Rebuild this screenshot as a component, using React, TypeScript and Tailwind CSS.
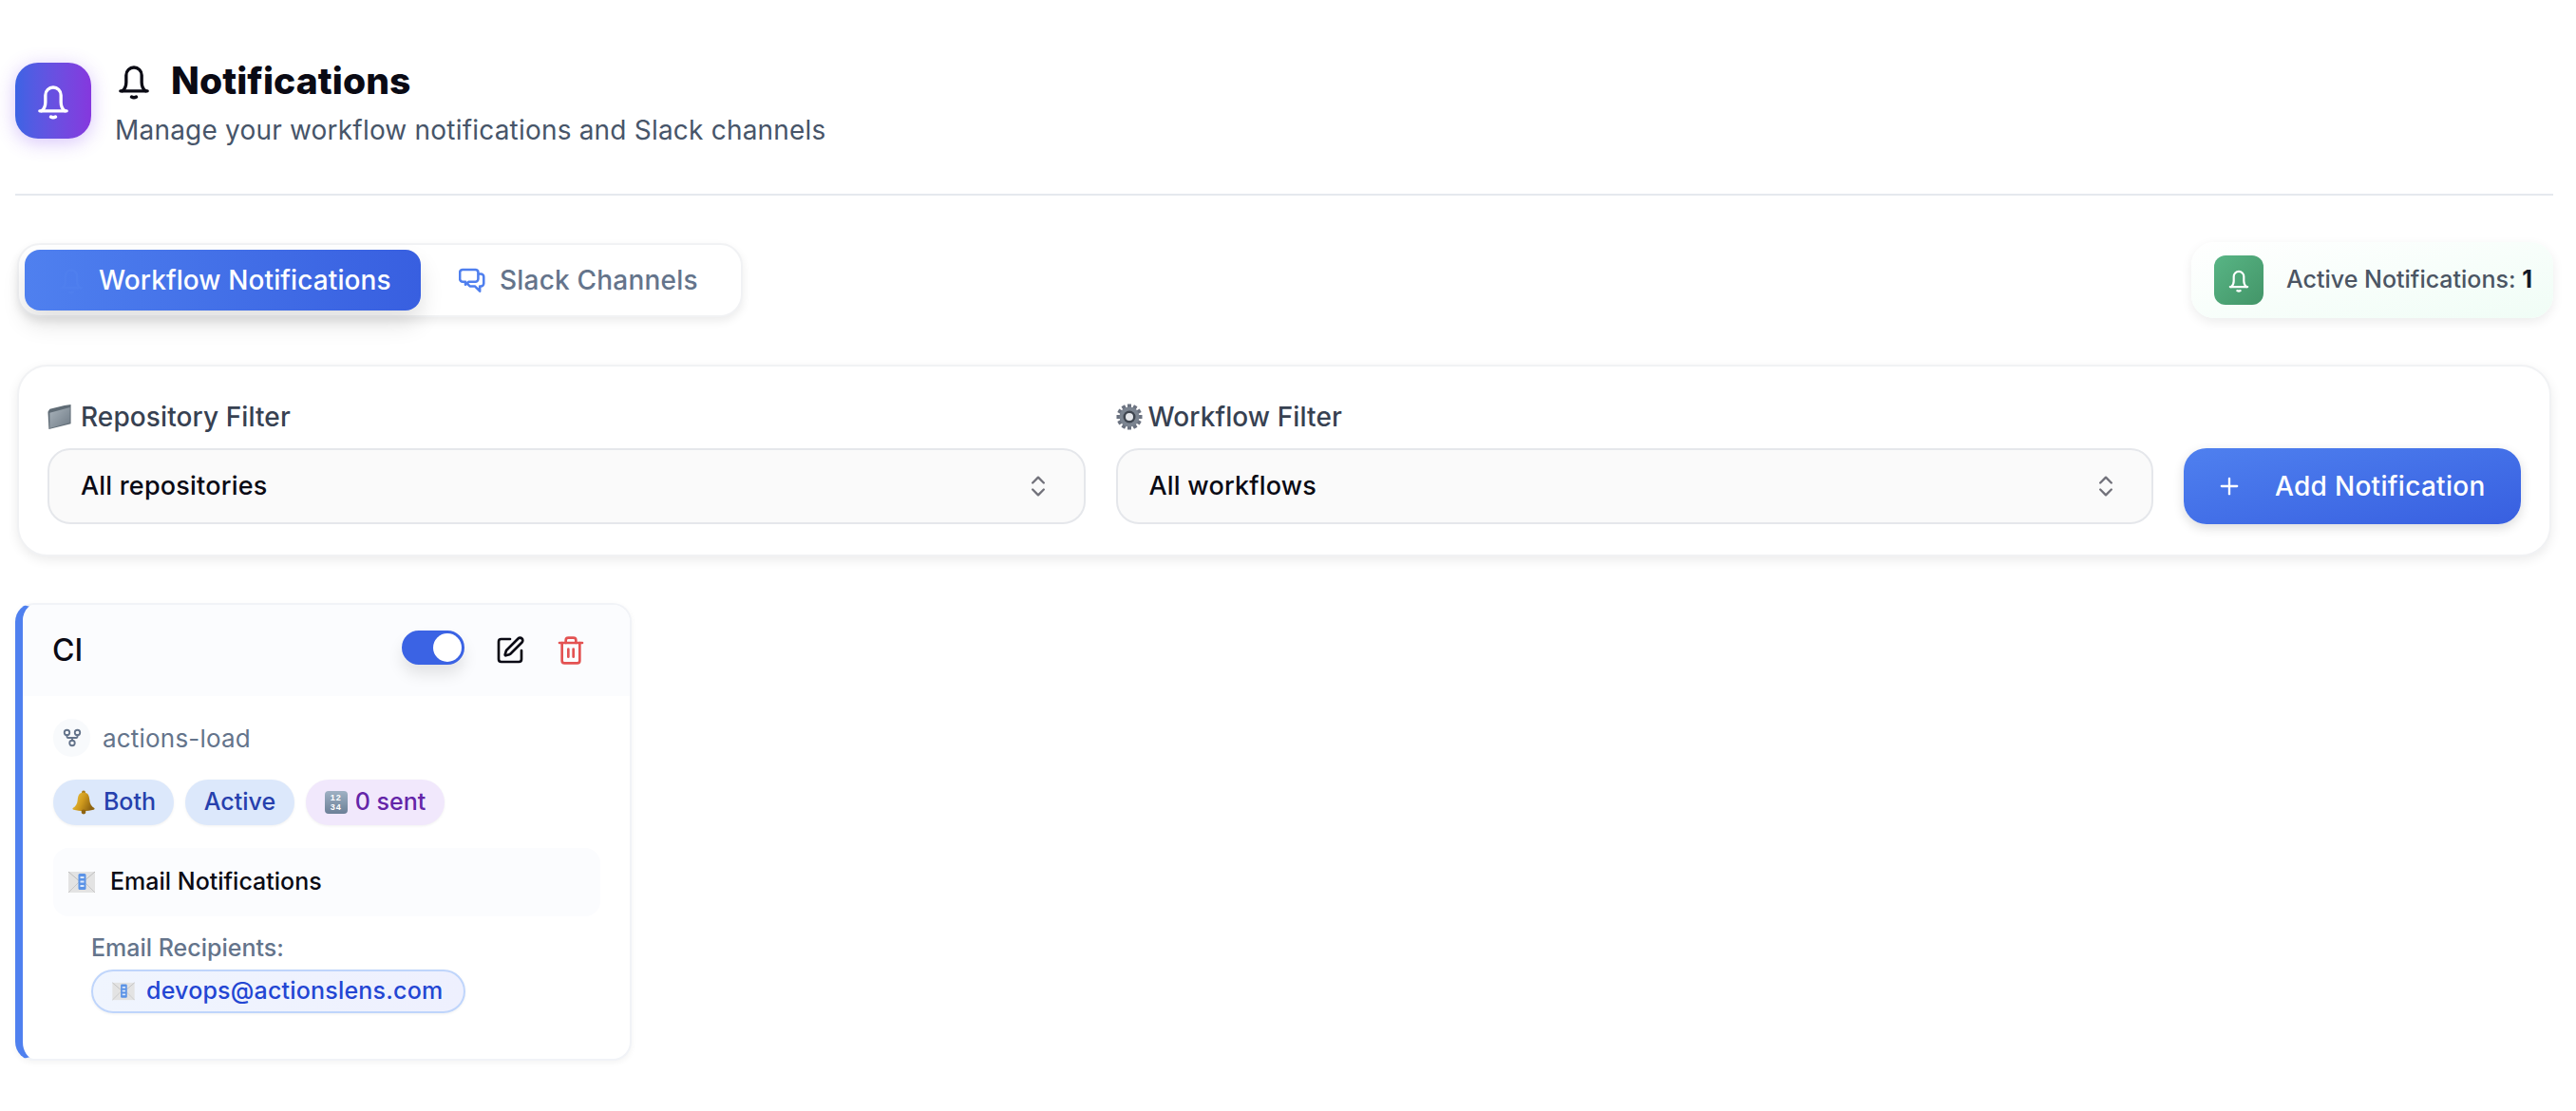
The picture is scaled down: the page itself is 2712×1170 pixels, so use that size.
import React from "react";
import { Plus, ChevronsUpDown, SquarePen, Trash2, GitFork } from "lucide-react";

function BellGlyph({ className, sw = 2 }: { className?: string; sw?: number }) {
  return (
    <svg viewBox="0 0 24 24" fill="none" stroke="currentColor" strokeWidth={sw} strokeLinecap="round" strokeLinejoin="round" className={className}>
      <path d="M3.5 18.5h17" />
      <path d="M4.5 18.5c1.8-1.2 2.6-3 2.6-5.5V8.5a4.9 4.9 0 0 1 9.8 0V13c0 2.5.8 4.3 2.6 5.5" />
      <path d="M10.5 22.2c1 .6 2 .6 3 0" />
    </svg>
  );
}

function ChatIcon({ className }: { className?: string }) {
  return (
    <svg viewBox="0 0 24 24" fill="none" stroke="currentColor" strokeWidth={2.2} strokeLinecap="round" strokeLinejoin="round" className={className}>
      <path d="M3.5 2.5h11.5a2.5 2.5 0 0 1 2.5 2.5v6a2.5 2.5 0 0 1-2.5 2.5H9l-3 2.5v-2.5H3.5A2.5 2.5 0 0 1 1 11V5a2.5 2.5 0 0 1 2.5-2.5z" />
      <path d="M18 6.5h2a2.5 2.5 0 0 1 2.5 2.5v6a2.5 2.5 0 0 1-2.5 2.5h-1v4.5l-4.5-4.5H10l-2-2" />
    </svg>
  );
}

function FolderEmoji({ className }: { className?: string }) {
  return (
    <svg viewBox="0 0 26 28" className={className}>
      <defs>
        <linearGradient id="fold" x1="0" y1="0" x2="1" y2="1">
          <stop offset="0" stopColor="#a9b3bb" />
          <stop offset="1" stopColor="#6f7b86" />
        </linearGradient>
      </defs>
      <path d="M0 8 L2 5 L18 1 L25 0 L25 21 L1 27 Z" fill="#5f6b75" />
      <path d="M2 9 L24 3 L24 20 L2 26 Z" fill="url(#fold)" />
    </svg>
  );
}

function GearEmoji({ className }: { className?: string }) {
  const teeth = [0, 30, 60, 90, 120, 150, 180, 210, 240, 270, 300, 330];
  return (
    <svg viewBox="0 0 28 28" className={className}>
      {teeth.map((a) => (
        <rect key={a} x="12" y="0.5" width="4" height="6" fill="#6b7280" transform={`rotate(${a} 14 14)`} />
      ))}
      <circle cx="14" cy="14" r="10.5" fill="#7b8490" />
      <circle cx="14" cy="14" r="6.5" fill="#3f4650" />
      <circle cx="14" cy="14" r="4" fill="#e5e7eb" />
    </svg>
  );
}

function GoldBell({ className }: { className?: string }) {
  return (
    <svg viewBox="0 0 26 26" className={className}>
      <defs>
        <linearGradient id="gold" x1="0" y1="0" x2="1" y2="0.4">
          <stop offset="0" stopColor="#f0c84a" />
          <stop offset="0.55" stopColor="#cf9a1d" />
          <stop offset="1" stopColor="#8f6410" />
        </linearGradient>
      </defs>
      <circle cx="13" cy="2.5" r="2" fill="#a87a18" />
      <path d="M13 2.5c4.6 0 6 3.6 6.3 8 .3 4 1.8 6.6 5 8.6.6.7.2 1.4-.8 1.7-6.5 1.6-14.5 1.6-21 0-1-.3-1.4-1-.8-1.7 3.2-2 4.7-4.6 5-8.6.3-4.4 1.700-8 6.300-8z" fill="url(#gold)" />
      <circle cx="13" cy="23" r="2.400" fill="#8f6410" />
    </svg>
  );
}

function NumbersEmoji({ className }: { className?: string }) {
  return (
    <div className={`flex flex-col items-center justify-center rounded-[4px] bg-gradient-to-b from-[#9fb1c4] to-[#6c8097] font-bold leading-[10px] tracking-[1px] text-[9px] text-white ${className ?? ""}`} style={{ fontFamily: '"Liberation Sans", sans-serif' }}>
      <span>12</span>
      <span>34</span>
    </div>
  );
}

function MailEmoji({ className }: { className?: string }) {
  return (
    <svg viewBox="0 0 28 24" className={className}>
      <rect x="0" y="1" width="28" height="22" fill="#e3e3e3" />
      <path d="M0 1 L14 13 L28 1" fill="none" stroke="#bdbdbd" strokeWidth="1" />
      <path d="M0 23 L11 12 M28 23 L17 12" stroke="#c8c8c8" strokeWidth="1" />
      <rect x="10.500" y="3" width="8" height="17" rx="1.500" fill="#5b93e6" />
      <rect x="12.500" y="6" width="4" height="2" fill="#dbe8fb" />
      <rect x="12.500" y="10.500" width="4" height="2" fill="#dbe8fb" />
      <rect x="12.500" y="15" width="4" height="2" fill="#dbe8fb" />
    </svg>
  );
}

function Select({ label }: { label: string }) {
  return (
    <div className="flex h-[80px] items-center justify-between rounded-[24px] border-2 border-[#e5e7eb] bg-[#fafafa] pl-[33px] pr-[34px]">
      <span className="text-[27px] font-medium tracking-[0.2px] text-[#0a0a14]">{label}</span>
      <ChevronsUpDown className="h-[28px] w-[28px] text-[#71717a]" strokeWidth={2} />
    </div>
  );
}

export default function App() {
  return (
    <div className="min-h-[1170px] bg-white pl-4 pr-6 pt-[64px] text-[#0f172a]" style={{ fontFamily: 'Inter, "Noto Sans", sans-serif' }}>
      {/* Header */}
      <div className="flex h-[142px] items-start gap-[25px] border-b-2 border-[#e5e9ee]">
        <div className="mt-[2px] flex h-[80px] w-[80px] items-center justify-center rounded-[24px] bg-gradient-to-r from-[#3b63e4] to-[#8537de] text-white shadow-[0_4px_20px_rgba(124,58,237,0.3)]">
          <BellGlyph className="h-[40px] w-[40px]" sw={2} />
        </div>
        <div className="flex flex-col">
          <div className="flex items-center gap-[19px]">
            <BellGlyph className="h-[40px] w-[40px] text-[#0a0a14]" sw={2} />
            <h1 className="text-[39px] font-extrabold leading-[42px] tracking-[0.1px] text-[#0a0a14]">Notifications</h1>
          </div>
          <p className="mt-[13px] text-[28px] leading-[36px] tracking-[0.2px] text-[#475569]">Manage your workflow notifications and Slack channels</p>
        </div>
      </div>

      {/* Tabs row */}
      <div className="mt-[49px] flex items-center justify-between pl-[2px]">
        <div className="flex h-[78px] w-[764px] items-center gap-[40px] rounded-[24px] border-2 border-[#f1f2f4] bg-white pl-[6px] shadow-[0_4px_10px_rgba(0,0,0,0.08)]">
          <div className="flex h-[64px] w-[417px] items-center gap-[14px] rounded-[16px] bg-gradient-to-r from-[#4f80ef] to-[#385fe0] pl-[34px] text-white shadow-[0_14px_24px_rgba(0,0,0,0.12)]">
            <BellGlyph className="h-[30px] w-[30px] text-[#4f7fee]" />
            <span className="text-[28px] font-medium tracking-[0.1px]">Workflow Notifications</span>
          </div>
          <div className="flex items-center gap-[15px]">
            <ChatIcon className="h-[28px] w-[28px] text-[#4f7fee]" />
            <span className="text-[28px] font-medium tracking-[0.2px] text-[#64748b]">Slack Channels</span>
          </div>
        </div>

        <div className="flex h-[80px] w-[381px] items-center gap-[24px] rounded-[24px] bg-gradient-to-br from-white to-[#f0fdf6] pl-[24px] shadow-[0_4px_12px_rgba(0,0,0,0.08)]">
          <div className="flex h-[52px] w-[52px] items-center justify-center rounded-[12px] bg-gradient-to-br from-[#58b585] to-[#439568] text-white">
            <BellGlyph className="h-[26px] w-[26px]" sw={2} />
          </div>
          <span className="text-[25px] font-medium tracking-[0px] text-[#4b5563]">
            Active Notifications: <span className="font-bold text-[#111827]">1</span>
          </span>
        </div>
      </div>

      {/* Filter card */}
      <div className="ml-[2px] mr-[2px] mt-[49px] flex h-[202px] items-end gap-[32px] rounded-[32px] border-2 border-[#f1f2f4] bg-white px-[30px] pb-[32px] shadow-[0_4px_12px_rgba(0,0,0,0.08)]">
        <div className="flex flex-1 flex-col gap-[12px]">
          <div className="flex items-center gap-[9px]">
            <FolderEmoji className="h-[27px] w-[26px]" />
            <span className="text-[28px] font-medium tracking-[0.1px] text-[#374151]">Repository Filter</span>
          </div>
          <Select label="All repositories" />
        </div>
        <div className="flex flex-1 flex-col gap-[12px]">
          <div className="flex items-center gap-[6px]">
            <GearEmoji className="h-[28px] w-[28px]" />
            <span className="text-[28px] font-medium tracking-[0.1px] text-[#374151]">Workflow Filter</span>
          </div>
          <Select label="All workflows" />
        </div>
        <div className="flex h-[80px] w-[355px] items-center rounded-[24px] bg-gradient-to-br from-[#4f80ef] to-[#385fe0] pl-[34px] text-white shadow-[0_4px_12px_rgba(0,0,0,0.14)]">
          <Plus className="h-[28px] w-[28px]" strokeWidth={2} />
          <span className="ml-[34px] text-[28px] font-medium tracking-[0.3px]">Add Notification</span>
        </div>
      </div>

      {/* Notification card */}
      <div className="mt-[49px] h-[482px] w-[649px] overflow-hidden rounded-[20px] border-2 border-l-8 border-[#f1f3f7] border-l-[#4f80ef] bg-white shadow-[0_2px_6px_rgba(0,0,0,0.05)]">
        <div className="flex h-[96px] items-center justify-between bg-[#fbfcfe] pl-[31px] pr-[46px]">
          <span className="text-[32px] font-medium leading-none text-[#0a0a14]">CI</span>
          <div className="flex items-center gap-[32px]">
            <div className="relative -mt-[6px] h-[36px] w-[66px] rounded-full border-2 border-[#3b63e4] bg-[#3b63e4] shadow-[0_10px_16px_rgba(0,0,0,0.1)]">
              <div className="absolute right-[1px] top-[1px] h-[30px] w-[30px] rounded-full bg-white" />
            </div>
            <SquarePen className="h-[32px] w-[32px] text-[#0a0a14]" strokeWidth={2} />
            <Trash2 className="h-[32px] w-[32px] text-[#e35252]" strokeWidth={2} />
          </div>
        </div>

        <div className="pl-[32px] pr-[32px]">
          <div className="mt-[24px] flex items-center gap-[13px]">
            <div className="flex h-[40px] w-[39px] items-center justify-center rounded-full bg-[#f8fafc]">
              <GitFork className="h-[22px] w-[22px] text-[#64748b]" strokeWidth={2} />
            </div>
            <span className="text-[26px] tracking-[0.2px] text-[#64748b]">actions-load</span>
          </div>

          <div className="mt-[24px] flex gap-[12px]">
            <div className="flex h-[48px] w-[127px] items-center justify-center gap-[8px] rounded-full bg-[#dce8fb] text-[#2640ad] shadow-[0_1px_3px_rgba(0,0,0,0.06)]">
              <GoldBell className="h-[26px] w-[26px]" />
              <span className="text-[25px] font-medium">Both</span>
            </div>
            <div className="flex h-[48px] w-[115px] items-center justify-center rounded-full bg-[#dce8fb] text-[#2640ad] shadow-[0_1px_3px_rgba(0,0,0,0.06)]">
              <span className="text-[25px] font-medium">Active</span>
            </div>
            <div className="flex h-[48px] w-[146px] items-center justify-center gap-[8px] rounded-full bg-[#f1e8fc] text-[#6425a8] shadow-[0_1px_3px_rgba(0,0,0,0.06)]">
              <NumbersEmoji className="h-[24px] w-[24px]" />
              <span className="text-[25px] font-medium">0 sent</span>
            </div>
          </div>

          <div className="mt-[24px] flex h-[72px] w-[576px] items-center gap-[16px] rounded-[16px] bg-[#fbfcfe] pl-[16px]">
            <MailEmoji className="h-[24px] w-[28px]" />
            <span className="text-[25px] font-medium text-[#0a0a14]">Email Notifications</span>
          </div>

          <div className="ml-[40px] mt-[16px] flex flex-col items-start gap-[6px]">
            <span className="text-[25px] font-medium leading-[34px] text-[#64748b]">Email Recipients:</span>
            <div className="flex h-[46px] w-[394px] items-center gap-[12px] rounded-full border-2 border-[#bfd5fb] bg-gradient-to-r from-[#f0f5fe] to-[#eef0fe] pl-[20px] shadow-[0_1px_3px_rgba(0,0,0,0.06)]">
              <MailEmoji className="h-[20px] w-[24px]" />
              <span className="text-[25px] font-medium tracking-[0.2px] text-[#2346d3]">devops@actionslens.com</span>
            </div>
          </div>
        </div>
      </div>
    </div>
  );
}
